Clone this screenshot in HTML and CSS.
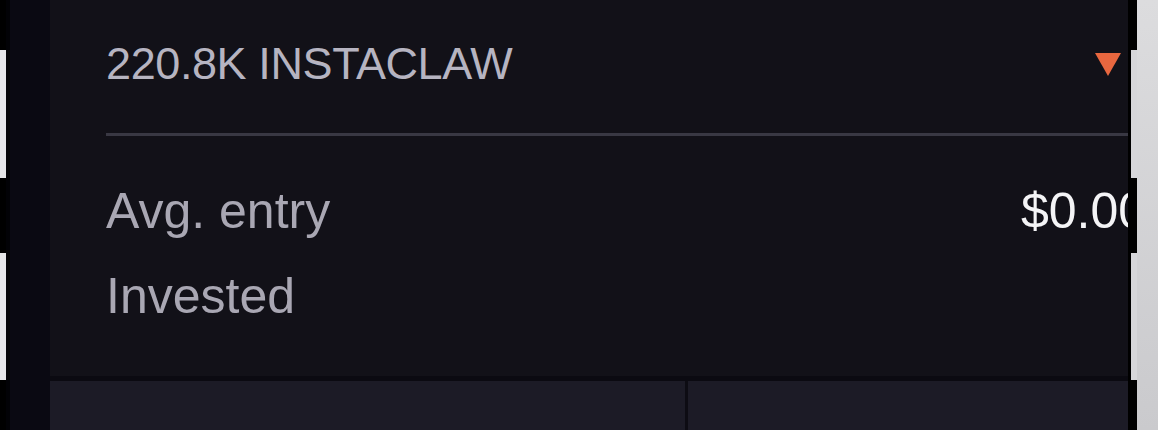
FILE: index.html
```html
<!DOCTYPE html>
<html lang="en">
<head>
<meta charset="UTF-8">
<meta name="viewport" content="width=device-width, initial-scale=1.0">
<title>Position</title>
<link rel="stylesheet" href="styles.css">
</head>
<body>
  <div class="frame-left">
    <div class="seg dark h50"></div>
    <div class="seg light h128"></div>
    <div class="seg dark h75"></div>
    <div class="seg light h127"></div>
    <div class="seg dark fill"></div>
  </div>
  <div class="gutter"></div>
  <div class="rail"></div>

  <div class="screen">
    <div class="card">
      <div class="content">
        <div class="row holding">
          <span class="amount">220.8K INSTACLAW</span>
          <span class="caret"></span>
        </div>
        <div class="divider"></div>
        <div class="row stat">
          <span class="label">Avg. entry</span>
          <span class="value">$0.00</span>
        </div>
        <div class="row stat second">
          <span class="label">Invested</span>
        </div>
      </div>
    </div>
    <div class="actions">
      <div class="action"></div>
      <div class="action"></div>
    </div>
  </div>

  <div class="frame-right">
    <div class="seg dark h50"></div>
    <div class="seg split h128"></div>
    <div class="seg dark h75"></div>
    <div class="seg split h127"></div>
    <div class="seg dark fill"></div>
  </div>
  <div class="bezel"></div>
</body>
</html>
```

FILE: styles.css
```css
  body {
    margin: 0;
    padding: 0;
    width: 1158px;
    height: 430px;
    overflow: hidden;
    display: flex;
    background: #000;
    font-family: 'Liberation Sans', Arial, sans-serif;
  }

  .frame-left {
    width: 6px;
    display: flex;
    flex-direction: column;
  }

  .frame-right {
    width: 9px;
    display: flex;
    flex-direction: column;
  }

  .seg.dark { background: #000; }
  .seg.light { background: #e4e4e6; }
  .seg.split { background: linear-gradient(to right, #000 3px, #d6d6d9 3px); }
  .h50 { height: 50px; }
  .h128 { height: 128px; }
  .h75 { height: 75px; }
  .h127 { height: 127px; }
  .fill { flex: 1; }

  .gutter {
    width: 4px;
    background: #020206;
  }

  .rail {
    width: 40px;
    background: #0a0912;
  }

  .bezel {
    width: 21px;
    background: linear-gradient(to bottom, #dcdcde, #cacacd);
  }

  .screen {
    width: 1078px;
    display: flex;
    flex-direction: column;
  }

  .card {
    height: 376px;
    background: #121118;
    overflow: hidden;
    padding-left: 56px;
  }

  .content {
    width: 1040px;
    padding-top: 36px;
  }

  .row {
    display: flex;
    justify-content: space-between;
    align-items: center;
  }

  .amount {
    font-size: 45px;
    line-height: 56px;
    color: #b6b4c1;
    letter-spacing: -0.4px;
  }

  .caret {
    width: 0;
    height: 0;
    margin-right: 25px;
    border-left: 13px solid transparent;
    border-right: 13px solid transparent;
    border-top: 23px solid #e8673f;
  }

  .divider {
    margin-top: 41px;
    height: 3px;
    background: #393843;
  }

  .stat {
    margin-top: 45px;
    font-size: 50px;
    line-height: 60px;
  }

  .stat.second {
    margin-top: 25px;
  }

  .label {
    color: #a9a7b3;
  }

  .value {
    color: #f4f4f6;
  }

  .actions {
    flex: 1;
    display: flex;
    border-top: 5px solid #0b0a11;
    gap: 3px;
    background: #0d0c13;
  }

  .action {
    flex: 1;
    background: #1c1b26;
  }

  .action:first-child {
    flex: 0 0 635px;
  }
```
